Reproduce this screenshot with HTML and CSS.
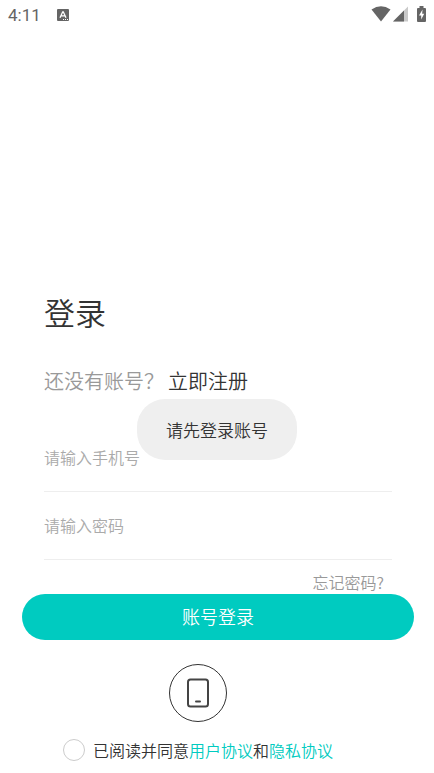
FILE: index.html
```html
<!DOCTYPE html>
<html lang="zh-CN">
<head>
<meta charset="utf-8">
<meta name="viewport" content="width=device-width, initial-scale=1">
<title>登录</title>
<link rel="stylesheet" href="styles.css">
</head>
<body>
<header class="status">
  <time class="clock">4:11</time>
  <svg class="app-icon" width="12" height="12" viewBox="0 0 12 12" aria-hidden="true">
    <rect width="12" height="12" rx="1" fill="#656565"/>
    <path d="M3 8.700L5.700 2.800h.6L9 8.700M4.200 6.900h3.600" fill="none" stroke="#fff" stroke-width="1.300"/>
    <path d="M6 10.500h1M8 10.500h1M10 10.500h1" stroke="#fff"/>
  </svg>
  <div class="indicators">
    <svg width="20" height="16" viewBox="0 0 20 16" aria-hidden="true">
      <path d="M0.500 3.500Q10-3 19.500 3.500L10 15.500Z" fill="#656565"/>
    </svg>
    <svg width="15" height="16" viewBox="0 0 15 16" aria-hidden="true">
      <path d="M15 0.500V15.500H0Z" fill="#c9c9c9"/>
      <path d="M11 4.500V15.500H0Z" fill="#656565"/>
    </svg>
    <svg class="battery" width="9" height="16" viewBox="0 0 9 16" aria-hidden="true">
      <path d="M1 2H2.500V0H6.500V2H8Q9 2 9 3V15Q9 16 8 16H1Q0 16 0 15V3Q0 2 1 2Z" fill="#656565"/>
      <path d="M5.500 3.500L2 9.500H4.200V13.500L7.200 7.700H5.200Z" fill="#fff"/>
    </svg>
  </div>
</header>
<main class="page">
  <form class="login">
    <div class="fields">
      <h1 class="title">登录</h1>
      <p class="signup">还没有账号？<a class="signup-link" href="#">立即注册</a></p>
      <input class="field" type="tel" placeholder="请输入手机号" aria-label="手机号">
      <input class="field" type="password" placeholder="请输入密码" aria-label="密码">
      <a class="forgot" href="#">忘记密码?</a>
    </div>
    <button class="submit" type="submit">账号登录</button>
    <div class="extras">
      <button class="phone" type="button" aria-label="手机登录">
        <svg width="24" height="30" viewBox="0 0 24 30" aria-hidden="true">
          <rect x="2" y="1.500" width="20" height="27" rx="2.500" fill="none" stroke="#444" stroke-width="2"/>
          <path d="M10 23.500h4" stroke="#444" stroke-width="2" stroke-linecap="round"/>
        </svg>
      </button>
      <div class="agreement">
        <input class="check" id="agree" type="checkbox">
        <span><label for="agree">已阅读并同意</label><a class="policy" href="#">用户协议</a>和<a class="policy" href="#">隐私协议</a></span>
      </div>
    </div>
  </form>
  <div class="toast" role="status">请先登录账号</div>
</main>
</body>
</html>
```
FILE: styles.css
```css
* {
  box-sizing: border-box;
}

body {
  margin: 0;
  background: #fff;
  color: #333;
  font-family: "Noto Sans CJK SC", sans-serif;
  font-size: 16px;
  font-weight: 350;
  line-height: 24px;
}

a {
  color: inherit;
  text-decoration: none;
}

.status {
  display: flex;
  align-items: center;
  height: 30px;
  padding: 0 8px;
  color: #656565;
}

.clock {
  font-family: Roboto, sans-serif;
  font-size: 17px;
  font-weight: 400;
}

.app-icon {
  margin-left: 16px;
}

.indicators {
  display: flex;
  align-items: center;
  gap: 2px;
  height: 28px;
  margin-left: auto;
  align-self: flex-start;
}

.battery {
  margin-left: 7px;
}

.page {
  position: relative;
  padding: 258px 20px 0 22px;
}

.login {
  display: flex;
  flex-direction: column;
}

.fields {
  display: flex;
  flex-direction: column;
  padding: 0 22px;
}

.title {
  margin: 0;
  font-size: 31px;
  font-weight: inherit;
  line-height: 48px;
}

.signup {
  margin: 30px 0 28px;
  color: #999;
  font-size: 20px;
  line-height: 30px;
}

.signup-link {
  margin-left: 4px;
  color: #333;
}

.field {
  width: 100%;
  height: 68px;
  padding: 0 0 2px;
  border: 0;
  border-bottom: 1px solid #eee;
  background: none;
  color: #333;
  font: inherit;
  outline: none;
}

.field::placeholder {
  color: #aaa;
  opacity: 1;
}

.forgot {
  align-self: flex-end;
  margin: 10px 8px 0 0;
  color: #999;
}

.submit {
  height: 46px;
  padding: 0 0 2px;
  border: 0;
  border-radius: 23px;
  background: #00cbc0;
  color: #fff;
  font: inherit;
  font-size: 18px;
}

.extras {
  display: flex;
  flex-direction: column;
  align-items: center;
  gap: 16px;
  padding: 24px 40px 8px 0;
}

.phone {
  display: flex;
  align-items: center;
  justify-content: center;
  width: 58px;
  height: 58px;
  padding: 0;
  border: 1px solid #333;
  border-radius: 50%;
  background: none;
}

.agreement {
  display: flex;
  align-items: center;
  gap: 8px;
}

.check {
  appearance: none;
  width: 22px;
  height: 22px;
  margin: 0;
  border: 1px solid #ccc;
  border-radius: 50%;
}

.policy {
  color: #00cbc0;
}

.toast {
  position: absolute;
  top: 369px;
  left: 50%;
  transform: translateX(-50%);
  padding: 18px 29px;
  border-radius: 28px;
  background: #efefef;
  font-size: 17px;
  line-height: 25px;
  white-space: nowrap;
}
```
